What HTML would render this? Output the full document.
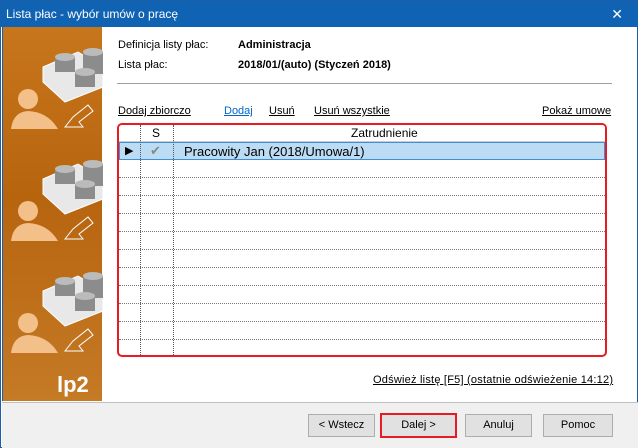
<!DOCTYPE html>
<html><head><meta charset="utf-8"><style>
*{margin:0;padding:0;box-sizing:border-box}
body{width:638px;height:448px;overflow:hidden;background:#fff;font-family:"Liberation Sans",sans-serif;font-size:11px;color:#000;position:relative}
.win{position:absolute;left:0;top:0;width:638px;height:448px;border:1px solid #1a5fa8;background:#fff}
.title{position:absolute;left:0;top:0;width:638px;height:26px;background:#0f63b2;color:#fff;font-size:12px;line-height:26px;padding-left:5px}
.x{position:absolute;right:14px;top:0;color:#fff;font-size:14px;line-height:26px}
.left{position:absolute;left:1px;top:26px;width:100px;height:374px;background:linear-gradient(180deg,#c8761c 0%,#b7640f 45%,#c57a25 100%);border-left:1px solid #1a5fa8}
.lp2{position:absolute;left:54px;top:345px;color:#fff;font-weight:bold;font-size:22px}
.t{position:absolute;white-space:nowrap}
u{text-decoration:underline}
.hr{position:absolute;left:116px;top:82px;width:495px;height:1px;background:#a0a0a0}
.grid{position:absolute;left:116px;top:122px;width:490px;height:234px;border:2px solid #e51c23;border-radius:5px;overflow:hidden;background:#fff}
.row{position:absolute;left:0;width:486px;height:18px;border-bottom:1px dotted #777}
.vl{position:absolute;top:0;height:234px;border-left:1px dotted #555}
.bottom{position:absolute;left:1px;top:401px;width:636px;height:46px;background:#f0f0f0;border-top:1px solid #c0c0c0}
.btn{position:absolute;top:413px;height:23px;border:1px solid #adadad;background:#e1e1e1;text-align:center;line-height:21px;font-size:11px}
</style></head><body><div class="win">
<div class="title">Lista płac - wybór umów o pracę</div>
<div class="x">✕</div>
<div class="left">
<svg width="100" height="374" viewBox="0 0 100 374">
<g id="g1">
<polygon points="40,40 75,25 100,40 100,60 62,75 40,55" fill="#e8e8e8" stroke="#fff"/>
<ellipse cx="62" cy="35" rx="10" ry="5" fill="#9a9a9a"/><rect x="52" y="30" width="20" height="15" fill="#8c8c8c"/><ellipse cx="62" cy="30" rx="10" ry="4" fill="#bbb"/>
<rect x="80" y="25" width="20" height="22" fill="#8c8c8c"/><ellipse cx="90" cy="25" rx="10" ry="4" fill="#bbb"/>
<rect x="72" y="45" width="20" height="15" fill="#8c8c8c"/><ellipse cx="82" cy="45" rx="10" ry="4" fill="#bbb"/>
<circle cx="25" cy="72" r="10" fill="#f3c08a"/><path d="M8,102 Q10,85 25,84 Q45,85 55,102Z" fill="#f3c08a"/>
<path d="M62,100 L70,90 L85,78 L90,84 L76,95 L80,100Z" fill="none" stroke="#fff"/>
</g>
<use href="#g1" y="112"/><use href="#g1" y="224"/>
</svg>
<div class="lp2">lp2</div>
</div>
<div class="t" style="left:117px;top:38px">Definicja listy płac:</div>
<div class="t" style="left:237px;top:38px;font-weight:bold">Administracja</div>
<div class="t" style="left:117px;top:58px">Lista płac:</div>
<div class="t" style="left:237px;top:58px;font-weight:bold">2018/01/(auto) (Styczeń 2018)</div>
<div class="hr"></div>
<div class="t" style="left:117px;top:104px"><u>Dodaj zbiorczo</u></div>
<div class="t" style="left:223px;top:104px;color:#0066cc"><u>Dodaj</u></div>
<div class="t" style="left:268px;top:104px"><u>Usuń</u></div>
<div class="t" style="left:313px;top:104px"><u>Usuń wszystkie</u></div>
<div class="t" style="left:541px;top:104px"><u>Pokaż umowe</u></div>
<div class="grid">
<div style="position:absolute;left:0;top:0;width:486px;height:17px;background:#fff;border-bottom:1px solid #ccc"></div>
<div class="t" style="left:33px;top:1px;font-size:12px">S</div>
<div class="t" style="left:232px;top:1px;font-size:12px">Zatrudnienie</div>
<div style="position:absolute;left:0;top:17px;width:486px;height:18px;background:#bcdcf4;border:1px solid #3c8fd8"></div>
<div class="t" style="left:6px;top:19px;font-size:11px">▶</div>
<div class="t" style="left:31px;top:18px;color:#888;font-size:13px">✔</div>
<div class="t" style="left:65px;top:19px;font-size:13px">Pracowity Jan (2018/Umowa/1)</div>
<div class="row" style="top:35px"></div><div class="row" style="top:53px"></div><div class="row" style="top:71px"></div><div class="row" style="top:89px"></div><div class="row" style="top:107px"></div><div class="row" style="top:125px"></div><div class="row" style="top:143px"></div><div class="row" style="top:161px"></div><div class="row" style="top:179px"></div><div class="row" style="top:197px"></div><div class="row" style="top:215px"></div>
<div class="vl" style="left:21px"></div><div class="vl" style="left:54px"></div>
</div>
<div class="t" style="left:372px;top:373px;letter-spacing:0.22px"><u>Odśwież listę [F5] (ostatnie odświeżenie 14:12)</u></div>
<div class="bottom"></div>
<div class="btn" style="left:307px;width:67px">&lt; Wstecz</div>
<div class="btn" style="left:379px;width:77px;border:2px solid #e51c23;top:412px;height:25px;line-height:21px">Dalej &gt;</div>
<div class="btn" style="left:464px;width:67px">Anuluj</div>
<div class="btn" style="left:542px;width:70px">Pomoc</div>
</div></body></html>
